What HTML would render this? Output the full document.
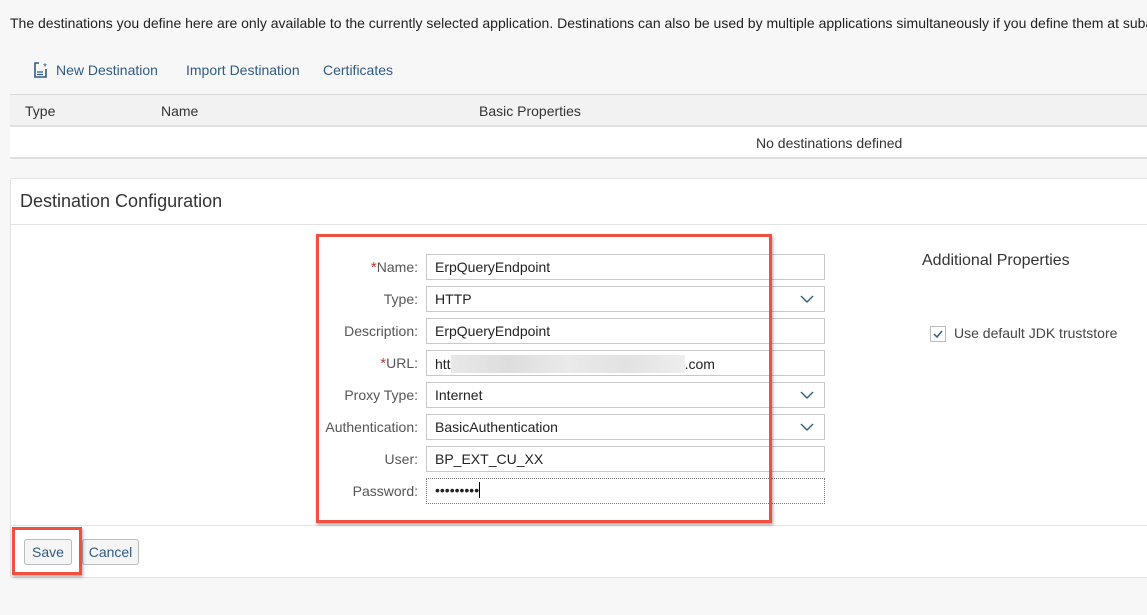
<!DOCTYPE html>
<html><head><meta charset="utf-8"><style>
*{box-sizing:border-box;margin:0;padding:0}
body{width:1147px;height:615px;overflow:hidden;background:#f7f7f7;font-family:"Liberation Sans",Arial,sans-serif;font-size:14px;color:#333;position:relative}
.a{position:absolute;white-space:nowrap}
.lnk{color:#2f5b85;font-size:14px}
.lbl{position:absolute;right:729px;font-size:14px;color:#555;text-align:right}
.in{position:absolute;left:426px;width:399px;height:26px;border:1px solid #c8c8c8;background:#fff;padding:4px 8px;font-size:14px;color:#222}
.chev{position:absolute;right:10px;top:6px}
.req{color:#c0392b;font-size:15px;vertical-align:top}
</style></head><body>
<div class="a" style="left:10px;top:15px;font-size:14px;color:#222">The destinations you define here are only available to the currently selected application. Destinations can also be used by multiple applications simultaneously if you define them at suba</div>

<svg class="a" style="left:31px;top:60px" width="20" height="20" viewBox="0 0 20 20"><path d="M8 3H4v14h11V9" fill="none" stroke="#2f5b85" stroke-width="1.6"/><path d="M6 12h6M6 14.5h6" stroke="#2f5b85" stroke-width="1.3"/><text x="12" y="10" font-size="10" fill="#2f5b85" font-family="Liberation Sans">*</text></svg>
<div class="a lnk" style="left:56px;top:62px">New Destination</div>
<div class="a lnk" style="left:186px;top:62px">Import Destination</div>
<div class="a lnk" style="left:323px;top:62px">Certificates</div>

<div class="a" style="left:10px;top:94px;width:1137px;height:33px;background:#f2f2f2;border-top:1px solid #d9d9d9;border-bottom:2px solid #e0e0e0"></div>
<div class="a" style="left:25px;top:103px">Type</div>
<div class="a" style="left:161px;top:103px">Name</div>
<div class="a" style="left:479px;top:103px">Basic Properties</div>
<div class="a" style="left:10px;top:127px;width:1137px;height:32px;background:#fff;border-bottom:2px solid #e0e0e0"></div>
<div class="a" style="left:756px;top:135px">No destinations defined</div>

<div class="a" style="left:10px;top:178px;width:1140px;height:400px;background:#fff;border:1px solid #e3e3e3;border-radius:3px"></div>
<div class="a" style="left:20px;top:191px;font-size:18px;color:#333">Destination Configuration</div>
<div class="a" style="left:11px;top:224px;width:1136px;height:1px;background:#e3e3e3"></div>
<div class="a" style="left:11px;top:525px;width:1136px;height:1px;background:#e3e3e3"></div>

<div class="lbl" style="top:259px"><span class="req">*</span>Name:</div>
<div class="in" style="top:254px">ErpQueryEndpoint</div>
<div class="lbl" style="top:291px">Type:</div>
<div class="in" style="top:286px">HTTP<svg class="chev" width="14" height="12"><path d="M1 3l6 6 6-6" fill="none" stroke="#2f5b85" stroke-width="1.4"/></svg></div>
<div class="lbl" style="top:323px">Description:</div>
<div class="in" style="top:318px">ErpQueryEndpoint</div>
<div class="lbl" style="top:355px"><span class="req">*</span>URL:</div>
<div class="in" style="top:350px">htt<span style="display:inline-block;width:234px;height:18px;vertical-align:-4px;background:linear-gradient(90deg,#e8e8e8,#ddd,#eaeaea,#e2e2e2,#eee)"></span>.com</div>
<div class="lbl" style="top:387px">Proxy Type:</div>
<div class="in" style="top:382px">Internet<svg class="chev" width="14" height="12"><path d="M1 3l6 6 6-6" fill="none" stroke="#2f5b85" stroke-width="1.4"/></svg></div>
<div class="lbl" style="top:419px">Authentication:</div>
<div class="in" style="top:414px">BasicAuthentication<svg class="chev" width="14" height="12"><path d="M1 3l6 6 6-6" fill="none" stroke="#2f5b85" stroke-width="1.4"/></svg></div>
<div class="lbl" style="top:451px">User:</div>
<div class="in" style="top:446px">BP_EXT_CU_XX</div>
<div class="lbl" style="top:483px">Password:</div>
<div class="in" style="top:478px;border:1px dotted #777;padding-top:3px">•••••••••<span style="display:inline-block;width:1px;height:16px;background:#000;vertical-align:-3px"></span></div>

<div class="a" style="left:316px;top:234px;width:456px;height:289px;border:3px solid #ee5142;box-shadow:1px 2px 3px rgba(0,0,0,.35)"></div>

<div class="a" style="left:922px;top:252px;font-size:16px;color:#333">Additional Properties</div>
<div class="a" style="left:930px;top:326px;width:16px;height:16px;border:1px solid #bbb;background:#fff"><svg width="14" height="14" style="position:absolute;left:0;top:0"><path d="M3 7l3 3 5-6" fill="none" stroke="#2f5b85" stroke-width="1.5"/></svg></div>
<div class="a" style="left:954px;top:325px;color:#444">Use default JDK truststore</div>

<div class="a" style="left:24px;top:539px;width:48px;height:26px;border:1px solid #bbb;border-radius:3px;background:#f5f5f5;color:#2f5b85;text-align:center;line-height:24px">Save</div>
<div class="a" style="left:82px;top:539px;width:57px;height:26px;border:1px solid #bbb;border-radius:3px;background:#f5f5f5;color:#2f5b85;text-align:center;line-height:24px">Cancel</div>
<div class="a" style="left:12px;top:527px;width:70px;height:48px;border:3px solid #ee5142;box-shadow:1px 2px 3px rgba(0,0,0,.35)"></div>
</body></html>
